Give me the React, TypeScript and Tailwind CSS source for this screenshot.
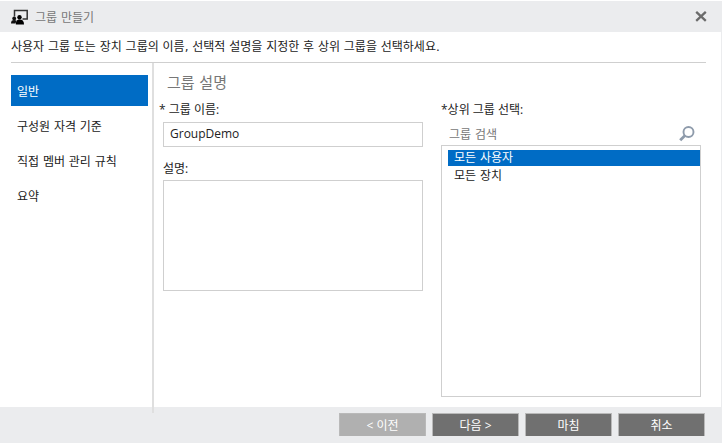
import { useState } from "react";
import type { ReactNode } from "react";

const steps = ["일반", "구성원 자격 기준", "직접 멤버 관리 규칙", "요약"];
const groups = ["모든 사용자", "모든 장치"];

function GroupIcon() {
  return (
    <svg viewBox="0 0 18 16" className="h-4 w-[18px]" aria-hidden="true">
      <path d="M3.5 7.5V1.5h12.7v8.5H11.5" fill="none" stroke="#333" strokeWidth="1.5" />
      <circle cx="8.5" cy="8.2" r="2.2" fill="#000" />
      <circle cx="3.2" cy="9.4" r="1.9" fill="#111" />
      <path d="M4.8 15.4c0-2.6.8-4.8 3.8-4.8s4.4 2 4.4 4.8z" fill="#000" />
      <path d="M0 14.6c0-2.4 1-3.5 3.2-3.5 1 0 1.8.2 2.4.7L4.4 14.6z" fill="#111" />
    </svg>
  );
}

function CloseIcon() {
  return (
    <svg viewBox="0 0 12 12" className="size-3" aria-hidden="true">
      <path d="M1.2.8l9.6 9M10.8.8l-9.6 9" stroke="#6b6b6b" strokeWidth="2.3" fill="none" />
    </svg>
  );
}

function SearchIcon() {
  return (
    <svg viewBox="0 0 16 16" className="size-4" aria-hidden="true">
      <circle cx="9.5" cy="6" r="5" fill="none" stroke="#8e9bab" strokeWidth="1.9" />
      <path d="M6 9.4L1.2 14.2" stroke="#8e9bab" strokeWidth="2.8" fill="none" />
    </svg>
  );
}

function FooterButton({ children, disabled }: { children: ReactNode; disabled?: boolean }) {
  return (
    <button
      type="button"
      disabled={disabled}
      className="h-[23px] w-[87px] border border-b-0 border-[#b9b9b9] bg-[#707070] pt-0.5 font-['Open_Sans','Noto_Sans_CJK_KR',sans-serif] text-white disabled:bg-[#b0b0b0]"
    >
      {children}
    </button>
  );
}

export default function App() {
  const [step, setStep] = useState(0);
  const [parent, setParent] = useState(0);

  return (
    <div className="min-h-screen bg-white py-px pr-px font-['DejaVu_Sans','Noto_Sans_CJK_KR',sans-serif] text-[12px] leading-4 text-[#222]">
      <form className="flex min-h-[calc(100vh-2px)] flex-col border-r border-[#ebecee]">
        <header className="flex h-[31px] items-center gap-1.5 bg-[#ebecee] pr-3.5 pl-[11px]">
          <GroupIcon />
          <h1 className="flex-1 pt-0.5 text-[#777]">그룹 만들기</h1>
          <button type="button" aria-label="닫기">
            <CloseIcon />
          </button>
        </header>

        <p className="mr-[15px] ml-[11px] border-b border-[#cfcfcf] pt-[7px] pb-[7px]">
          사용자 그룹 또는 장치 그룹의 이름, 선택적 설명을 지정한 후 상위 그룹을 선택하세요.
        </p>

        <div className="flex flex-1">
          <nav className="relative -mb-1.5 flex w-[154px] shrink-0 flex-col gap-1 border-r-2 border-[#dfdfdf] pt-3 pr-1 pl-[11px]">
            {steps.map((name, i) => (
              <a
                key={name}
                href="#"
                onClick={() => setStep(i)}
                aria-current={i === step ? "step" : undefined}
                className="flex h-[31px] items-center px-1.5 pt-0.5 aria-[current=step]:bg-[#006cc5] aria-[current=step]:text-white"
              >
                {name}
              </a>
            ))}
          </nav>

          <main className="flex flex-1 flex-col pt-2.5 pr-5 pb-2.5 pl-[9px]">
            <h2 className="px-1 text-[15px] leading-5 text-[#777]">그룹 설명</h2>
            <div className="grid flex-1 grid-cols-2 gap-[18px] pt-[9px]">
              <div className="flex flex-col">
                <label
                  htmlFor="name"
                  className="-ml-1 pb-1 font-['Open_Sans','Noto_Sans_CJK_KR',sans-serif]"
                >
                  * 그룹 이름:
                </label>
                <input
                  id="name"
                  defaultValue="GroupDemo"
                  className="h-[25px] border border-[#cfcfcf] px-1.5 pb-0.5 font-['Open_Sans',sans-serif]"
                />
                <label
                  htmlFor="description"
                  className="pt-3.5 pb-[3px] font-['Open_Sans','Noto_Sans_CJK_KR',sans-serif]"
                >
                  설명:
                </label>
                <textarea
                  id="description"
                  className="h-[111px] resize-none border border-[#cfcfcf] px-1.5 py-1"
                />
              </div>

              <div className="flex flex-col">
                <label
                  htmlFor="search"
                  className="pb-1 font-['Open_Sans','Noto_Sans_CJK_KR',sans-serif]"
                >
                  *상위 그룹 선택:
                </label>
                <div className="flex h-[23px] items-center pr-1.5 pl-2">
                  <input
                    id="search"
                    placeholder="그룹 검색"
                    className="min-w-0 flex-1 pt-0.5 outline-none placeholder:text-[#777]"
                  />
                  <button type="button" aria-label="검색">
                    <SearchIcon />
                  </button>
                </div>
                <fieldset className="flex min-h-[200px] flex-1 flex-col gap-0.5 border border-[#cfcfcf] pt-1 pl-1.5">
                  {groups.map((name, i) => (
                    <label
                      key={name}
                      className="flex items-center px-1.5 has-checked:bg-[#006cc5] has-checked:text-white"
                    >
                      <input
                        type="radio"
                        name="parent"
                        checked={i === parent}
                        onChange={() => setParent(i)}
                        className="size-0 appearance-none"
                      />
                      {name}
                    </label>
                  ))}
                </fieldset>
              </div>
            </div>
          </main>
        </div>

        <footer className="flex justify-end gap-1.5 bg-[#ebecee] pt-1.5 pr-4 pb-[7px]">
          <FooterButton disabled>&lt; 이전</FooterButton>
          <FooterButton>다음 &gt;</FooterButton>
          <FooterButton>마침</FooterButton>
          <FooterButton>취소</FooterButton>
        </footer>
      </form>
    </div>
  );
}
